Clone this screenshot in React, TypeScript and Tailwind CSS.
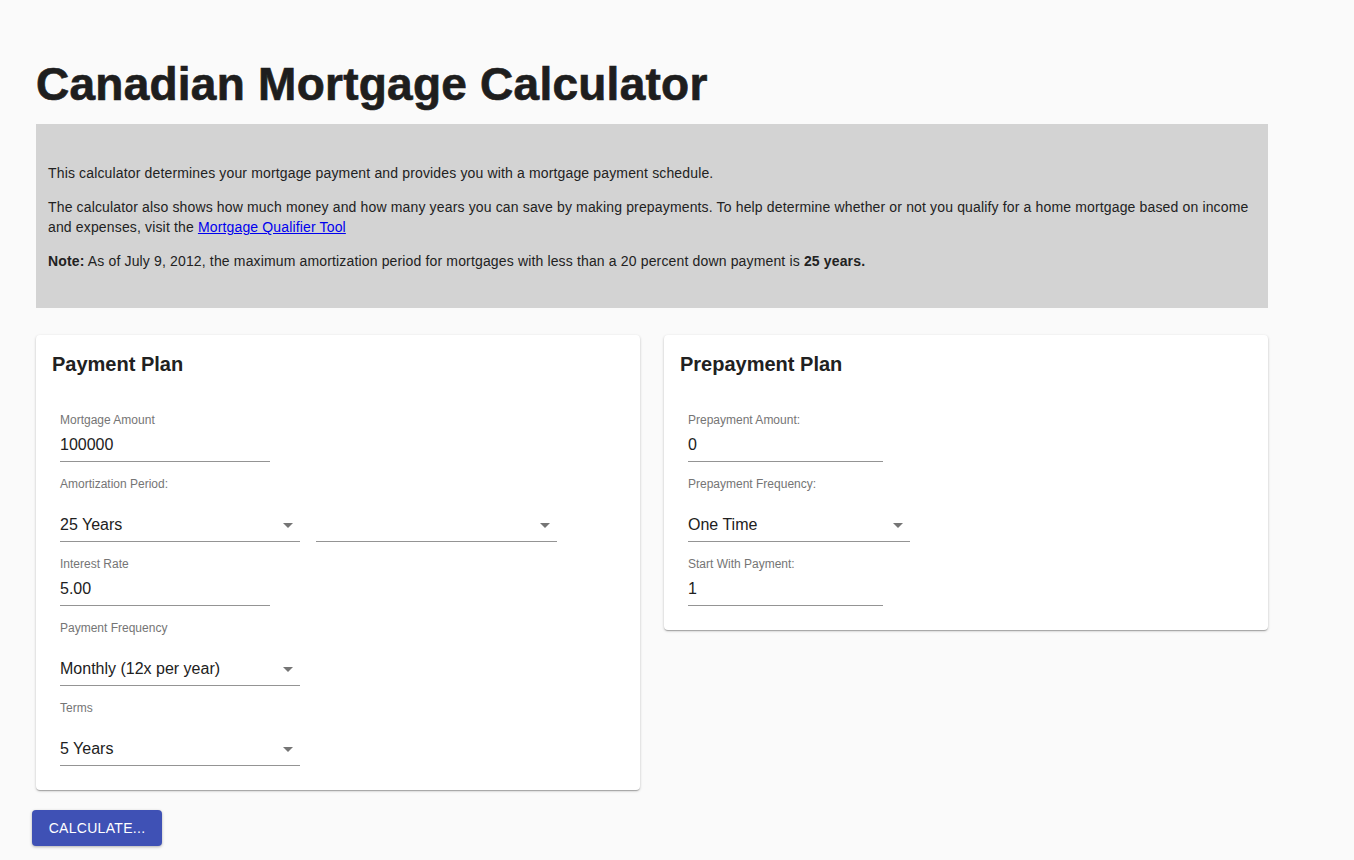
import React from 'react';

const font = { fontFamily: '"Liberation Sans", Arial, Helvetica, sans-serif' };

function Arrow() {
  return (
    <svg viewBox="0 0 24 24" className="absolute right-0 top-[5px] w-6 h-6 fill-[#757575]">
      <path d="M7 10l5 5 5-5z" />
    </svg>
  );
}

function TextField({ label, value, width }: { label: string; value: string; width: string }) {
  return (
    <div className={`flex flex-col ${width}`}>
      <span className="text-[12px] leading-[17px] text-[#757575]">{label}</span>
      <div className="h-[33px] border-b border-[#949494] flex items-center text-[16px] text-[#212121]">{value}</div>
    </div>
  );
}

function SelectField({ value, width }: { value: string; width: string }) {
  return (
    <div className={`relative h-[34px] pt-px border-b border-[#949494] flex items-center text-[16px] text-[#212121] ${width}`}>
      <span>{value}</span>
      <Arrow />
    </div>
  );
}

function SelectGroup({ label, children }: { label: string; children: React.ReactNode }) {
  return (
    <div className="flex flex-col">
      <span className="text-[12px] leading-[17px] text-[#757575]">{label}</span>
      <div className="mt-[15px] flex gap-4">{children}</div>
    </div>
  );
}

function Card({ title, children }: { title: string; children: React.ReactNode }) {
  return (
    <div className="bg-white rounded shadow-[0_1px_3px_rgba(0,0,0,0.2),0_1px_1px_rgba(0,0,0,0.14),0_2px_1px_-1px_rgba(0,0,0,0.12)] px-4 pt-[17px] pb-6">
      <h2 className="text-[20px] leading-6 font-bold text-[#212121]">{title}</h2>
      <div className="px-2 mt-9 flex flex-col gap-[14px]">{children}</div>
    </div>
  );
}

export default function App() {
  return (
    <div className="min-h-[860px] bg-[#fafafa] pt-[62px] px-[36px] text-[#212121]" style={font}>
      <h1 className="text-[46px] leading-[44px] font-bold text-[#1e1e1e] tracking-[0.25px] [-webkit-text-stroke:0.7px_#1e1e1e]">
        Canadian Mortgage Calculator
      </h1>

      <div className="mt-[18px] w-[1232px] bg-[#d3d3d3] pt-[39px] pb-[37px] px-3 text-[14px] leading-5 text-[#222] tracking-[0.15px]">
        <p>This calculator determines your mortgage payment and provides you with a mortgage payment schedule.</p>
        <p className="mt-[14px]">
          The calculator also shows how much money and how many years you can save by making prepayments. To help determine whether or not you qualify for a home mortgage based on income and expenses, visit the{' '}
          <a href="#" className="text-[#0000ee] underline">Mortgage Qualifier Tool</a>
        </p>
        <p className="mt-[14px]">
          <b>Note:</b> As of July 9, 2012, the maximum amortization period for mortgages with less than a 20 percent down payment is <b>25 years.</b>
        </p>
      </div>

      <div className="mt-[27px] w-[1232px] grid grid-cols-2 gap-6 items-start">
        <Card title="Payment Plan">
          <TextField label="Mortgage Amount" value="100000" width="w-[210px]" />
          <SelectGroup label="Amortization Period:">
            <SelectField value="25 Years" width="w-[240px]" />
            <SelectField value="" width="w-[241px]" />
          </SelectGroup>
          <TextField label="Interest Rate" value="5.00" width="w-[210px]" />
          <SelectGroup label="Payment Frequency">
            <SelectField value="Monthly (12x per year)" width="w-[240px]" />
          </SelectGroup>
          <SelectGroup label="Terms">
            <SelectField value="5 Years" width="w-[240px]" />
          </SelectGroup>
        </Card>
        <Card title="Prepayment Plan">
          <TextField label="Prepayment Amount:" value="0" width="w-[195px]" />
          <SelectGroup label="Prepayment Frequency:">
            <SelectField value="One Time" width="w-[222px]" />
          </SelectGroup>
          <TextField label="Start With Payment:" value="1" width="w-[195px]" />
        </Card>
      </div>

      <button className="mt-5 -ml-1 w-[130px] h-9 rounded bg-[#3f51b5] text-white text-[14px] uppercase tracking-[0.3px] shadow-[0_1px_3px_rgba(0,0,0,0.3)]">
        Calculate...
      </button>
    </div>
  );
}
